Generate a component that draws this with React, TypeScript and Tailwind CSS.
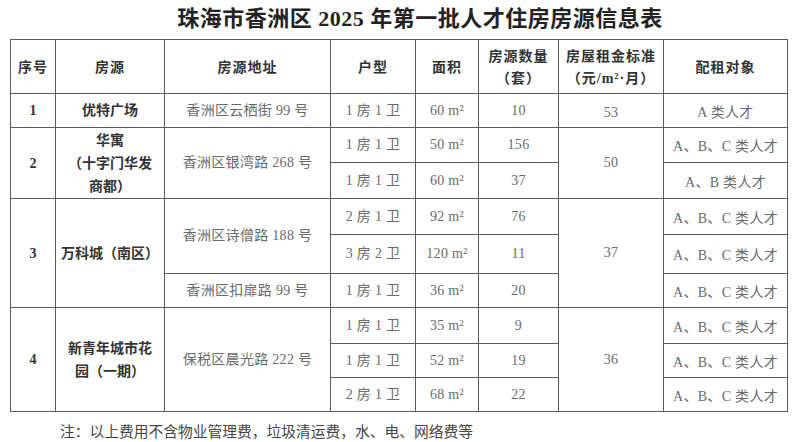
import React from "react";

const FONT = { fontFamily: '"Liberation Serif", "Noto Sans CJK SC", serif' };

function H({ children }: { children: React.ReactNode }) {
  return (
    <div className="bg-white flex items-center justify-center text-center text-[14px] leading-[22px] font-bold text-[#333] tracking-[1px] pt-[3px]">
      {children}
    </div>
  );
}

function B({ children, className = "" }: { children: React.ReactNode; className?: string }) {
  return (
    <div className={"bg-white flex items-center justify-center text-center text-[14px] leading-[22px] text-[#6a6a6a] tracking-[0.3px] " + className}>
      {children}
    </div>
  );
}

function S({ children, className = "" }: { children: React.ReactNode; className?: string }) {
  return (
    <div className={"bg-white flex items-center justify-center text-center text-[14px] leading-[23px] font-bold text-[#333] " + className}>
      {children}
    </div>
  );
}

const ABC = "A、B、C 类人才";

export default function App() {
  return (
    <div className="w-[800px] h-[442px] bg-white overflow-hidden" style={FONT}>
      <div className="h-[39px] flex items-center justify-center pl-[40px] pb-[2px]">
        <div className="text-[22px] leading-[26px] font-bold text-[#222] tracking-[0.5px]">
          珠海市香洲区 2025 年第一批人才住房房源信息表
        </div>
      </div>
      <div className="ml-[10px] w-[778px] grid gap-px bg-[#5a5a5a] p-px grid-cols-[44px_108px_165px_84px_62px_79px_104px_123px] grid-rows-[53px_33px_34px_35px_35px_38px_33px_35px_33px_33px]">
        <H>序号</H>
        <H>房源</H>
        <H>房源地址</H>
        <H>户型</H>
        <H>面积</H>
        <H>
          房源数量
          <br />
          （套）
        </H>
        <H>
          房屋租金标准
          <br />
          （元/m²·月）
        </H>
        <H>配租对象</H>

        <S>1</S>
        <S>优特广场</S>
        <B>香洲区云栖街 99 号</B>
        <B>1 房 1 卫</B>
        <B>60 m²</B>
        <B>10</B>
        <B className="pt-[4px]">53</B>
        <B className="pt-[4px]">A 类人才</B>

        <S className="row-span-2">2</S>
        <S className="row-span-2">
          华寓
          <br />
          （十字门华发
          <br />
          商都）
        </S>
        <B className="row-span-2">香洲区银湾路 268 号</B>
        <B>1 房 1 卫</B>
        <B>50 m²</B>
        <B>156</B>
        <B className="row-span-2">50</B>
        <B className="pt-[4px]">{ABC}</B>
        <B>1 房 1 卫</B>
        <B>60 m²</B>
        <B>37</B>
        <B className="pt-[4px]">A、B 类人才</B>

        <S className="row-span-3">3</S>
        <S className="row-span-3">万科城（南区）</S>
        <B className="row-span-2">香洲区诗僧路 188 号</B>
        <B>2 房 1 卫</B>
        <B>92 m²</B>
        <B>76</B>
        <B className="row-span-3">37</B>
        <B className="pt-[4px]">{ABC}</B>
        <B>3 房 2 卫</B>
        <B>120 m²</B>
        <B>11</B>
        <B className="pt-[4px]">{ABC}</B>
        <B>香洲区扣扉路 99 号</B>
        <B>1 房 1 卫</B>
        <B>36 m²</B>
        <B>20</B>
        <B className="pt-[4px]">{ABC}</B>

        <S className="row-span-3">4</S>
        <S className="row-span-3">
          新青年城市花
          <br />
          园（一期）
        </S>
        <B className="row-span-3">保税区晨光路 222 号</B>
        <B>1 房 1 卫</B>
        <B>35 m²</B>
        <B>9</B>
        <B className="row-span-3">36</B>
        <B className="pt-[4px]">{ABC}</B>
        <B>1 房 1 卫</B>
        <B>52 m²</B>
        <B>19</B>
        <B className="pt-[4px]">{ABC}</B>
        <B>2 房 1 卫</B>
        <B>68 m²</B>
        <B>22</B>
        <B className="pt-[4px]">{ABC}</B>
      </div>
      <div className="mt-[10px] pl-[60px] text-[14.75px] leading-[20px] text-[#444]">
        注：以上费用不含物业管理费，垃圾清运费，水、电、网络费等
      </div>
    </div>
  );
}
